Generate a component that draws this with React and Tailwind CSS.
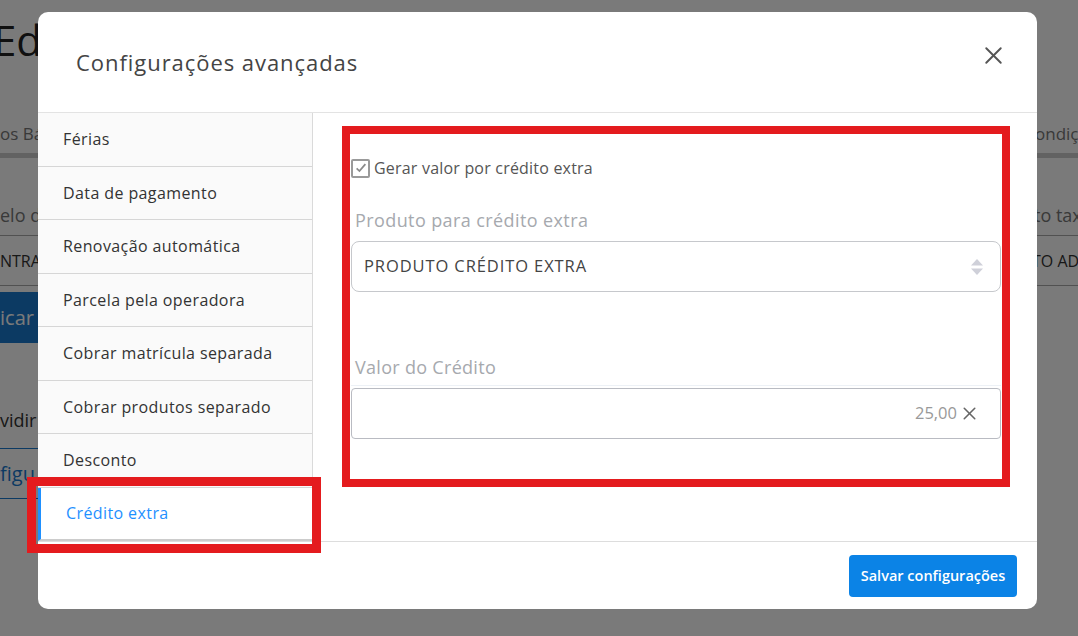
import { X } from "lucide-react";

const menu = [
  "Férias",
  "Data de pagamento",
  "Renovação automática",
  "Parcela pela operadora",
  "Cobrar matrícula separada",
  "Cobrar produtos separado",
  "Desconto",
];

function BackgroundPage() {
  // the page underneath the modal, only its edges show
  return (
    <div className="h-[636px] w-full overflow-hidden bg-white text-[#333]">
      <div className="flex h-full justify-between">
        <div className="w-[38px] overflow-hidden whitespace-nowrap">
          <div className="-ml-[7px] mt-[12px] text-[42px] leading-[56px] text-[#222]">Edi</div>
          <div className="mt-[46px] flex h-[44px] items-center border-b-[5px] border-[#ccc] text-[17px] text-[#777]">
            os Bás
          </div>
          <div className="mt-[44px] h-[34px] border-b border-[#aaa] text-[18px] text-[#777]">elo de</div>
          <div className="flex h-[50px] items-center border-b border-[#aaa] text-[16px]">NTRATO</div>
          <div className="mt-[6px] flex h-[51px] items-center bg-[#1a7ad0] text-[20px] text-white">icar a</div>
          <div className="mt-[64px] text-[18px]">vidir v</div>
          <div className="mt-[14px] flex h-[51px] items-center border-y border-[#1a7ad0] text-[20px] text-[#1a7ad0]">
            figu
          </div>
        </div>
        <div className="w-[41px] overflow-hidden whitespace-nowrap">
          <div className="mt-[114px] flex h-[44px] items-center border-b-[5px] border-[#ccc] text-[17px] text-[#777] -ml-[2px]">
            ondições
          </div>
          <div className="mt-[44px] h-[34px] border-b border-[#aaa] text-[18px] text-[#777] -ml-[3px]">to taxa</div>
          <div className="flex h-[50px] items-center border-b border-[#aaa] text-[16px] -ml-[5px]">TO ADESÃO</div>
        </div>
      </div>
    </div>
  );
}

export default function App() {
  return (
    <div
      className="relative h-[636px] w-[1078px] overflow-hidden"
      style={{ fontFamily: "'Open Sans', 'Noto Sans', sans-serif" }}
    >
      <BackgroundPage />
      <div className="absolute inset-0 bg-[#000]/[0.52]">
        <div className="relative ml-[38px] mt-[12px] flex h-[597px] w-[999px] flex-col rounded-[10px] bg-white">
          {/* header */}
          <div className="flex h-[101px] shrink-0 items-center justify-between border-b border-[#e3e3e3] pl-[38px] pr-[29px]">
            <h2 className="text-[22px] text-[#444] tracking-[0.95px]">Configurações avançadas</h2>
            <button className="-mt-[13px] text-[#555]">
              <X size={29} strokeWidth={1.6} />
            </button>
          </div>

          {/* body */}
          <div className="flex h-[429px] shrink-0 border-b border-[#ddd]">
            <div className="w-[275px] shrink-0 border-r border-[#dadada] bg-[#fafafa]">
              {menu.map((m) => (
                <div
                  key={m}
                  className="flex h-[53.5px] items-center border-b border-[#d6d6d6] pl-[25px] text-[16px] tracking-[0.4px] text-[#333]"
                >
                  {m}
                </div>
              ))}
              <div className="flex h-[53.5px] items-center border-b-2 border-l-[3px] border-b-[#ccc] border-l-[#1e90ff] bg-white pl-[25px] text-[16px] tracking-[0.4px] text-[#1e90ff]">
                Crédito extra
              </div>
            </div>

            <div className="flex-1 pl-[38px] pr-[36px] pt-[43px]">
              <label className="flex items-center gap-[4px] text-[16px] tracking-[0.2px] text-[#555]">
                <span className="flex h-[19px] w-[19px] items-center justify-center rounded-[2px] border-2 border-[#9a9a9a]">
                  <svg viewBox="0 0 16 16" className="h-[14px] w-[14px]" fill="none" stroke="#8a8a8a" strokeWidth="2">
                    <path d="M3 8.5l3.2 3L13 3.5" />
                  </svg>
                </span>
                Gerar valor por crédito extra
              </label>

              <div className="mt-[27px] pl-[4px] text-[18px] tracking-[0.4px] text-[#a6a9ae]">Produto para crédito extra</div>
              <div className="mt-[7px] flex h-[51px] items-center justify-between rounded-[8px] border border-[#c6c8cc] pl-[12px] pr-[16px] text-[16.5px] tracking-[0.9px] text-[#444]">
                PRODUTO CRÉDITO EXTRA
                <svg viewBox="0 0 14 18" className="h-[18px] w-[14px]" fill="#cfd0d9">
                  <path d="M7 1L13 7.5H1z" />
                  <path d="M7 17L13 10.5H1z" />
                </svg>
              </div>

              <div className="mt-[62px] border-b border-[#edf1f6] pb-[4px] pl-[4px] text-[18px] tracking-[0.3px] text-[#a6a9ae]">
                Valor do Crédito
              </div>
              <div className="mt-[2px] flex h-[51px] items-center justify-end gap-[2px] rounded-[4px] border border-[#b9bbc2] pr-[20px] text-[16.5px] text-[#999]">
                25,00
                <X size={21} strokeWidth={1.8} className="text-[#666]" />
              </div>
            </div>
          </div>

          {/* footer */}
          <div className="flex flex-1 items-center justify-end pr-[20px]">
            <button className="h-[42px] w-[168px] rounded-[4px] bg-[#0b83e6] text-[14.5px] font-semibold text-white">
              Salvar configurações
            </button>
          </div>

          {/* red highlight annotations */}
          <div className="pointer-events-none absolute left-[304px] top-[114px] h-[361px] w-[668px] border-[8px] border-[#e41b1e]" />
          <div className="pointer-events-none absolute -left-[11px] top-[465px] h-[76px] w-[294px] border-[9px] border-[#e41b1e]" />
        </div>
      </div>
    </div>
  );
}
